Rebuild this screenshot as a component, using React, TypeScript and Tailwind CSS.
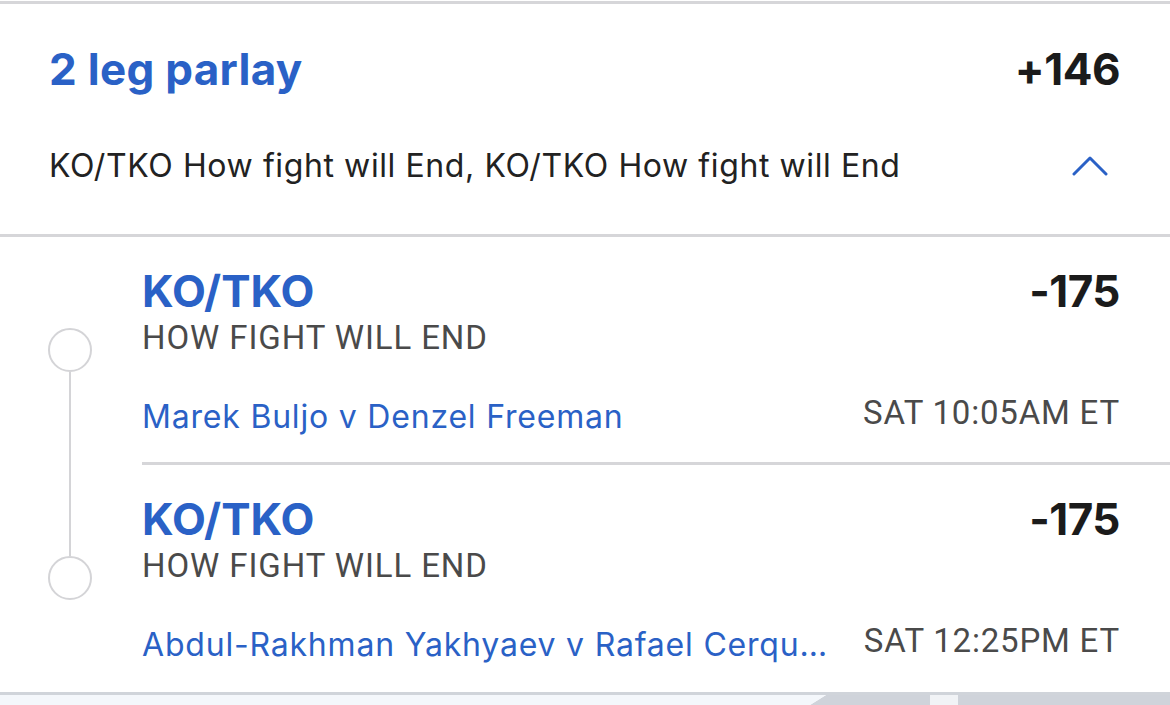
import React from "react";

const BLUE = "text-[#2a61c6]";

function Leg({
  first,
  name,
  time,
}: {
  first: boolean;
  name: string;
  time: string;
}) {
  return (
    <div className={`flex ${first ? "h-[228px]" : "h-[227px]"}`}>
      <div className="flex w-[142px] shrink-0 flex-col items-center pr-[2px]">
        {first ? (
          <>
            <div className="h-[91px]" />
            <div className="h-[44px] w-[44px] rounded-full border-[2.5px] border-[#d4d4d7]" />
            <div className="w-[2.5px] flex-1 bg-[#d4d4d7]" />
          </>
        ) : (
          <>
            <div className="h-[91px] w-[2.5px] bg-[#d4d4d7]" />
            <div className="h-[44px] w-[44px] rounded-full border-[2.5px] border-[#d4d4d7]" />
            <div className="flex-1" />
          </>
        )}
      </div>
      <div
        className={`flex min-w-0 flex-1 flex-col pr-[50px] ${first ? "border-b-[3px] border-[#d6d6d9]" : ""}`}
      >
        <div className="mt-[29px] flex items-start justify-between">
          <div className="flex flex-col">
            <div className={`text-[44px] font-bold leading-[50px] ${BLUE}`}>KO/TKO</div>
            <div
              className="mt-[2px] text-[33px] leading-[40px] tracking-[0.9px] text-[#4a4a4a]"
              style={{ fontFamily: "Roboto, sans-serif" }}
            >
              HOW FIGHT WILL END
            </div>
          </div>
          <div className="text-[44px] font-bold leading-[50px] tracking-[-0.5px] text-[#1b1b1b]">
            -175
          </div>
        </div>
        <div className="mt-[40px] flex items-start justify-between gap-[20px]">
          <div className={`min-w-0 truncate text-[32px] leading-[38px] tracking-[0.8px] ${BLUE}`}>
            {name}
          </div>
          <div
            className="mt-[-4px] shrink-0 text-[33px] leading-[38px] tracking-[0.8px] text-[#4a4a4a]"
            style={{ fontFamily: "Roboto, sans-serif" }}
          >
            {time}
          </div>
        </div>
      </div>
    </div>
  );
}

export default function App() {
  return (
    <div
      className="relative h-[705px] w-[1170px] overflow-hidden bg-white"
      style={{ fontFamily: "Inter, Lato, sans-serif" }}
    >
      <div className="pt-px">
        <div className="h-[3px] bg-[#d6d6d9]" />
      </div>
      <div className="flex flex-col px-[49px] pr-[50px]">
        <div className="mt-[40px] flex h-[50px] items-center justify-between">
          <div className={`text-[44px] font-bold leading-[50px] tracking-[0.3px] ${BLUE}`}>
            2 leg parlay
          </div>
          <div className="text-[44px] font-bold leading-[50px] tracking-[-0.5px] text-[#1b1b1b]">
            +146
          </div>
        </div>
        <div className="mt-[52px] flex h-[40px] items-center justify-between">
          <div className="text-[32px] leading-[40px] tracking-[0.6px] text-[#222]">
            KO/TKO How fight will End, KO/TKO How fight will End
          </div>
          <svg width="36" height="22" viewBox="0 0 36 22" className="mr-[12px]">
            <polyline
              points="2,19 18,3 34,19"
              fill="none"
              stroke="#2a61c6"
              strokeWidth="3"
              strokeLinecap="round"
              strokeLinejoin="round"
            />
          </svg>
        </div>
      </div>
      <div className="mt-[48px] h-[3px] bg-[#d6d6d9]" />
      <Leg first name="Marek Buljo v Denzel Freeman" time="SAT 10:05AM ET" />
      <Leg first={false} name="Abdul-Rakhman Yakhyaev v Rafael Cerqueira" time="SAT 12:25PM ET" />
      <div className="h-[3px] bg-[#d0d4da]" />
      <div className="flex h-[10px]">
        <div className="w-[810px] bg-[#f4f7fb]" />
        <svg width="16" height="10" viewBox="0 0 16 10" className="block">
          <polygon points="0,10 16,0 16,10" fill="#cfd3da" />
          <polygon points="0,0 16,0 0,10" fill="#f4f7fb" />
        </svg>
        <div className="w-[104px] bg-[#cfd3da]" />
        <div className="w-[28px] bg-[#f1f3f6]" />
        <div className="flex-1 bg-[#cfd3da]" />
      </div>
    </div>
  );
}
